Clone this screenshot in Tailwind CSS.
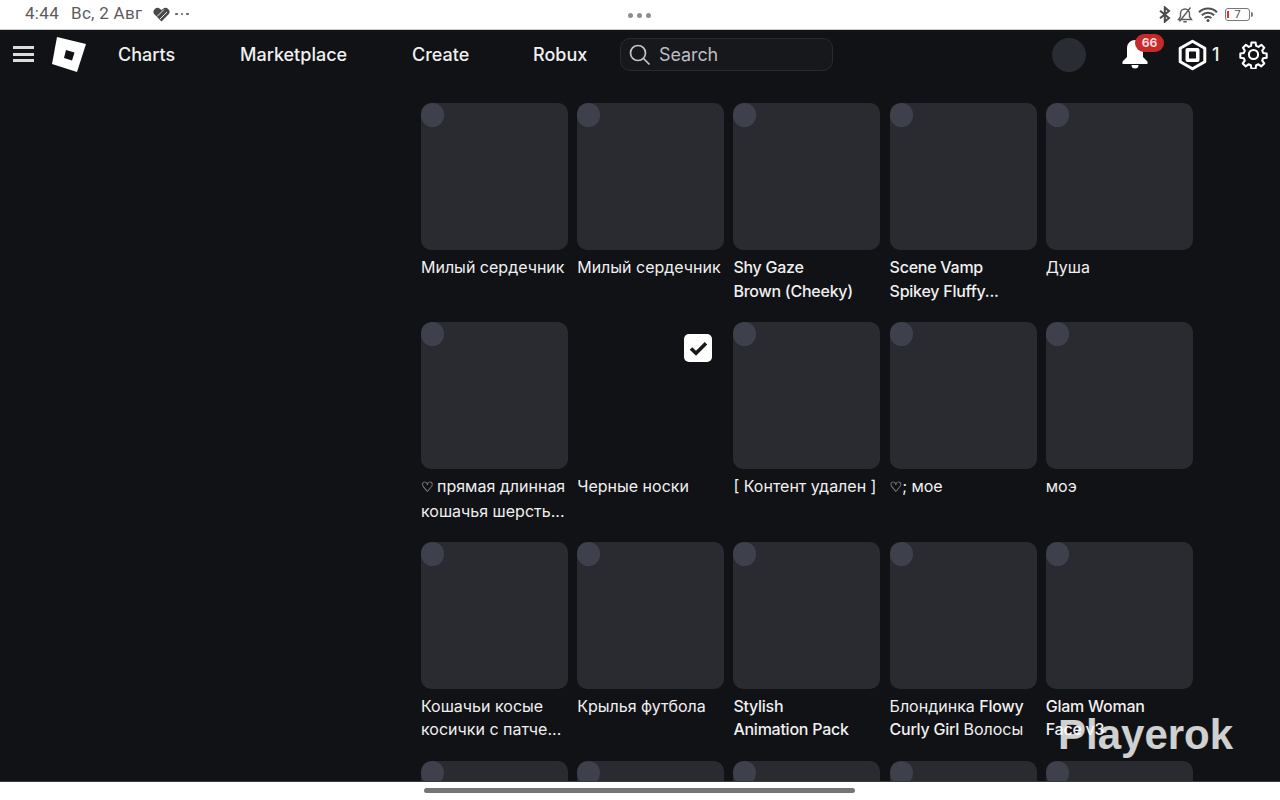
<!DOCTYPE html>
<html lang="en">
<head>
    <meta charset="UTF-8">
    <meta name="viewport" content="width=device-width, initial-scale=1.0">
    <title>Inventory</title>
    <script src="https://cdn.jsdelivr.net/npm/@tailwindcss/browser@4"></script>
</head>
<body class="bg-white font-['Inter',sans-serif]">
<div class="relative w-[1280px] h-[800px] overflow-hidden flex flex-col">

    <!-- status bar -->
    <div class="h-[30px] shrink-0 bg-white border-b border-[#c9c9cb] flex items-center relative text-[#5c5c5e]">
        <div class="flex items-center pl-[25px] font-['Roboto',sans-serif] text-[17px] pb-[1px]">
            <span class="w-[46px] tracking-[0.3px]">4:44</span>
            <span class="w-[82px] tracking-[0.3px] whitespace-nowrap">Вс, 2 Авг</span>
            <svg class="mt-[1px]" width="17" height="15" viewBox="0 0 17 15"><path d="M8.5 14.5 1.6 7.6a4 4 0 0 1 0-5.4 4.2 4.2 0 0 1 5.6-.3l1.3 1.2 1.3-1.2a4.2 4.2 0 0 1 5.6.3 4 4 0 0 1 0 5.4z" fill="#4a4a4d"/><path d="M4 9.5 11 2.5M7 12 14 5" stroke="#fff" stroke-width="0.9"/></svg>
            <span class="ml-[5px] flex gap-[3px]">
                <span class="w-[2.5px] h-[2.5px] rounded-full bg-[#5c5c5e]"></span>
                <span class="w-[2.5px] h-[2.5px] rounded-full bg-[#5c5c5e]"></span>
                <span class="w-[2.5px] h-[2.5px] rounded-full bg-[#5c5c5e]"></span>
            </span>
        </div>
        <div class="absolute left-[628px] top-[13px] flex gap-[4px]">
            <span class="w-[5px] h-[5px] rounded-full bg-[#8e8e90]"></span>
            <span class="w-[5px] h-[5px] rounded-full bg-[#8e8e90]"></span>
            <span class="w-[5px] h-[5px] rounded-full bg-[#8e8e90]"></span>
        </div>
        <div class="ml-auto flex items-center pr-[27px]">
            <svg width="12" height="17" viewBox="0 0 12 17" fill="none" stroke="#4a4a4d" stroke-width="2"><path d="M1 4.8 10 12 5.8 15.6V1.4L10 5 1 12.2"/></svg>
            <svg class="ml-[6px]" width="16" height="17" viewBox="0 0 16 17" fill="none" stroke="#5c5c5e" stroke-width="1.4"><path d="M1.5 13.5h13l-2-2.8V7.5a4.5 4.5 0 0 0-9 0v3.2zM6.3 15.7h3.4M2.5 15.5 13.5 1.5"/></svg>
            <svg class="ml-[5px]" width="20" height="15" viewBox="0 0 20 15" fill="none" stroke="#4f4f52" stroke-width="2"><path d="M1 5.3a12.8 12.8 0 0 1 18 0M3.8 8.3a8.8 8.8 0 0 1 12.4 0M6.6 11.1a4.8 4.8 0 0 1 6.8 0"/><circle cx="10" cy="13.4" r="1.5" fill="#4f4f52" stroke="none"/></svg>
            <div class="ml-[7px] w-[25px] h-[13px] rounded-[3px] border border-[#77777a] flex items-center relative">
                <span class="absolute left-[1px] top-[2px] w-[2px] h-[7px] bg-[#d8332c]"></span>
                <span class="w-full text-center text-[11px] leading-none font-['Roboto',sans-serif] text-[#4a4a4d]">7</span>
            </div>
            <span class="ml-[1px] w-[2px] h-[5px] rounded-r-sm bg-[#77777a]"></span>
        </div>
    </div>

    <!-- nav -->
    <nav class="h-[48px] shrink-0 bg-[#111216] flex items-center text-white relative">
        <div class="ml-[13px] w-[21px] flex flex-col gap-[3.5px]">
            <span class="h-[3px] bg-[#dcdcdc]"></span>
            <span class="h-[3px] bg-[#dcdcdc]"></span>
            <span class="h-[3px] bg-[#dcdcdc]"></span>
        </div>
        <svg class="ml-[16px]" width="38" height="38" viewBox="0 0 38 38"><path d="M7 2 36 9 27 37 2 29z" fill="#fff"/><path d="M16 15 24.5 17.5 22 25.5 14 23z" fill="#111216"/></svg>
        <div class="flex items-center text-[18px] font-medium text-[#f0f0f0]">
            <a class="ml-[30px] w-[122px]">Charts</a>
            <a class="w-[172px]">Marketplace</a>
            <a class="w-[121px]">Create</a>
            <a class="w-[87px]">Robux</a>
        </div>
        <div class="w-[213px] h-[33px] rounded-[10px] border border-[#2a2b30] bg-[#17181c] flex items-center">
            <svg class="ml-[7px]" width="23" height="23" viewBox="0 0 23 23" fill="none" stroke="#c4c4c6" stroke-width="1.7"><circle cx="10" cy="10" r="7.5"/><path d="M15.5 15.5 21.5 21.5"/></svg>
            <span class="ml-[8px] text-[18px] tracking-[-0.1px] text-[#bdbdc0]">Search</span>
        </div>
        <div class="absolute left-[1052px] top-[8px] w-[34px] h-[34px] rounded-full bg-[#2a2c33]"></div>
        <svg class="absolute left-[1122px] top-[9px]" width="26" height="30" viewBox="0 0 26 30" fill="#fff"><path d="M13 1a8 8 0 0 0-8 8v9L.5 22.5V25h25v-2.5L21 18V9a8 8 0 0 0-8-8z"/><path d="M9.5 26h7a3.5 3.5 0 0 1-7 0z"/></svg>
        <span class="absolute left-[1135px] top-[4px] w-[29px] h-[18px] rounded-full bg-[#c62a2a] text-[12px] leading-[18px] text-center font-bold text-[#f5dcdc]">66</span>
        <svg class="absolute left-[1178px] top-[9px]" width="29" height="32" viewBox="0 0 29 32" fill="none"><path d="M14.5 2.2 26.8 9.2V22.8L14.5 29.8 2.2 22.8V9.2z" stroke="#fff" stroke-width="3" stroke-linejoin="round"/><rect x="7.5" y="9" width="14" height="14" rx="2" fill="#fff"/><rect x="11" y="12.5" width="7" height="7" rx="0.5" fill="#111216"/></svg>
        <span class="absolute left-[1212px] top-[11px] text-[18px] font-medium text-[#f0f0f0]">1</span>
        <svg class="absolute left-[1239px] top-[10px]" width="29" height="29" viewBox="0 0 24 24" fill="none" stroke="#fff" stroke-width="1.7" stroke-linejoin="round"><path d="M10.3 2h3.4l.5 2.9 1.9.8 2.4-1.7 2.4 2.4-1.7 2.4.8 1.9 2.9.5v3.4l-2.9.5-.8 1.9 1.7 2.4-2.4 2.4-2.4-1.7-1.9.8-.5 2.9h-3.4l-.5-2.9-1.9-.8-2.4 1.7-2.4-2.4 1.7-2.4-.8-1.9-2.9-.5v-3.4l2.9-.5.8-1.9L3.3 6.4l2.4-2.4 2.4 1.7 1.9-.8z"/><circle cx="12" cy="12" r="3.8"/></svg>
    </nav>

    <!-- item grid -->
    <main class="flex-1 min-h-0 bg-[#111216] overflow-hidden pl-[421px] pt-[25px] border-b border-[#3a3b40]">
        <div class="grid grid-cols-[repeat(5,147px)] gap-x-[9.2px] auto-rows-[147px] gap-y-[72.4px] text-[16px] leading-[23.5px] text-[#f0f0f0]">

            <div><div class="relative h-[147px] rounded-[10px] bg-[#2a2b30] overflow-hidden mb-[6px]"><span class="absolute left-0 top-0 w-[23px] h-[24px] rounded-full bg-[#3e404b]"></span></div><p class="whitespace-nowrap">Милый сердечник</p></div>
            <div><div class="relative h-[147px] rounded-[10px] bg-[#2a2b30] overflow-hidden mb-[6px]"><span class="absolute left-0 top-0 w-[23px] h-[24px] rounded-full bg-[#3e404b]"></span></div><p class="whitespace-nowrap">Милый сердечник</p></div>
            <div><div class="relative h-[147px] rounded-[10px] bg-[#2a2b30] overflow-hidden mb-[6px]"><span class="absolute left-0 top-0 w-[23px] h-[24px] rounded-full bg-[#3e404b]"></span></div><p class="whitespace-nowrap font-medium tracking-[-0.25px]">Shy Gaze<br>Brown (Cheeky)</p></div>
            <div><div class="relative h-[147px] rounded-[10px] bg-[#2a2b30] overflow-hidden mb-[6px]"><span class="absolute left-0 top-0 w-[23px] h-[24px] rounded-full bg-[#3e404b]"></span></div><p class="whitespace-nowrap font-medium tracking-[-0.25px]">Scene Vamp<br>Spikey Fluffy...</p></div>
            <div><div class="relative h-[147px] rounded-[10px] bg-[#2a2b30] overflow-hidden mb-[6px]"><span class="absolute left-0 top-0 w-[23px] h-[24px] rounded-full bg-[#3e404b]"></span></div><p class="whitespace-nowrap">Душа</p></div>

            <div><div class="relative h-[147px] rounded-[10px] bg-[#2a2b30] overflow-hidden mb-[6px]"><span class="absolute left-0 top-0 w-[23px] h-[24px] rounded-full bg-[#3e404b]"></span></div><p class="whitespace-nowrap"><span class="inline-block w-[16px] text-[14px] font-['DejaVu_Sans',sans-serif]">♡</span>прямая длинная<br>кошачья шерсть...</p></div>
            <div><div class="relative h-[147px] rounded-[10px] mb-[6px]">
                <span class="absolute right-[12px] top-[12px] w-[28px] h-[28px] rounded-[5px] bg-white flex items-center justify-center">
                    <svg width="19" height="15" viewBox="0 0 19 15" fill="none" stroke="#17181c" stroke-width="3.6"><path d="M2 7.5 7 12.2 17 2.2"/></svg>
                </span>
            </div><p class="whitespace-nowrap">Черные носки</p></div>
            <div><div class="relative h-[147px] rounded-[10px] bg-[#2a2b30] overflow-hidden mb-[6px]"><span class="absolute left-0 top-0 w-[23px] h-[24px] rounded-full bg-[#3e404b]"></span></div><p class="whitespace-nowrap">[ Контент удален ]</p></div>
            <div><div class="relative h-[147px] rounded-[10px] bg-[#2a2b30] overflow-hidden mb-[6px]"><span class="absolute left-0 top-0 w-[23px] h-[24px] rounded-full bg-[#3e404b]"></span></div><p class="whitespace-nowrap"><span class="text-[14px] font-['DejaVu_Sans',sans-serif]">♡</span>; мое</p></div>
            <div><div class="relative h-[147px] rounded-[10px] bg-[#2a2b30] overflow-hidden mb-[6px]"><span class="absolute left-0 top-0 w-[23px] h-[24px] rounded-full bg-[#3e404b]"></span></div><p class="whitespace-nowrap">моэ</p></div>

            <div><div class="relative h-[147px] rounded-[10px] bg-[#2a2b30] overflow-hidden mb-[6px]"><span class="absolute left-0 top-0 w-[23px] h-[24px] rounded-full bg-[#3e404b]"></span></div><p class="whitespace-nowrap">Кошачьи косые<br>косички с патче...</p></div>
            <div><div class="relative h-[147px] rounded-[10px] bg-[#2a2b30] overflow-hidden mb-[6px]"><span class="absolute left-0 top-0 w-[23px] h-[24px] rounded-full bg-[#3e404b]"></span></div><p class="whitespace-nowrap">Крылья футбола</p></div>
            <div><div class="relative h-[147px] rounded-[10px] bg-[#2a2b30] overflow-hidden mb-[6px]"><span class="absolute left-0 top-0 w-[23px] h-[24px] rounded-full bg-[#3e404b]"></span></div><p class="whitespace-nowrap font-medium tracking-[-0.25px]">Stylish<br>Animation Pack</p></div>
            <div><div class="relative h-[147px] rounded-[10px] bg-[#2a2b30] overflow-hidden mb-[6px]"><span class="absolute left-0 top-0 w-[23px] h-[24px] rounded-full bg-[#3e404b]"></span></div><p class="whitespace-nowrap">Блондинка <span class="font-medium tracking-[-0.25px]">Flowy</span><br><span class="font-medium tracking-[-0.25px]">Curly Girl</span> Волосы</p></div>
            <div><div class="relative h-[147px] rounded-[10px] bg-[#2a2b30] overflow-hidden mb-[6px]"><span class="absolute left-0 top-0 w-[23px] h-[24px] rounded-full bg-[#3e404b]"></span></div><p class="whitespace-nowrap font-medium tracking-[-0.25px]">Glam Woman<br>Face v3</p></div>

            <div><div class="relative h-[147px] rounded-[10px] bg-[#2a2b30] overflow-hidden"><span class="absolute left-0 top-0 w-[23px] h-[24px] rounded-full bg-[#3e404b]"></span></div></div>
            <div><div class="relative h-[147px] rounded-[10px] bg-[#2a2b30] overflow-hidden"><span class="absolute left-0 top-0 w-[23px] h-[24px] rounded-full bg-[#3e404b]"></span></div></div>
            <div><div class="relative h-[147px] rounded-[10px] bg-[#2a2b30] overflow-hidden"><span class="absolute left-0 top-0 w-[23px] h-[24px] rounded-full bg-[#3e404b]"></span></div></div>
            <div><div class="relative h-[147px] rounded-[10px] bg-[#2a2b30] overflow-hidden"><span class="absolute left-0 top-0 w-[23px] h-[24px] rounded-full bg-[#3e404b]"></span></div></div>
            <div><div class="relative h-[147px] rounded-[10px] bg-[#2a2b30] overflow-hidden"><span class="absolute left-0 top-0 w-[23px] h-[24px] rounded-full bg-[#3e404b]"></span></div></div>
        </div>
    </main>

    <!-- home indicator -->
    <div class="h-[18px] shrink-0 bg-white flex justify-center items-start pt-[6px] pr-[1px]">
        <span class="w-[431px] h-[5px] rounded-full bg-[#757578]"></span>
    </div>

    <!-- watermark -->
    <span class="absolute left-[1058px] top-[707px] font-['Liberation_Sans',sans-serif] font-bold text-[42px] leading-[56px] text-white/80">Playerok</span>
</div>
</body>
</html>
